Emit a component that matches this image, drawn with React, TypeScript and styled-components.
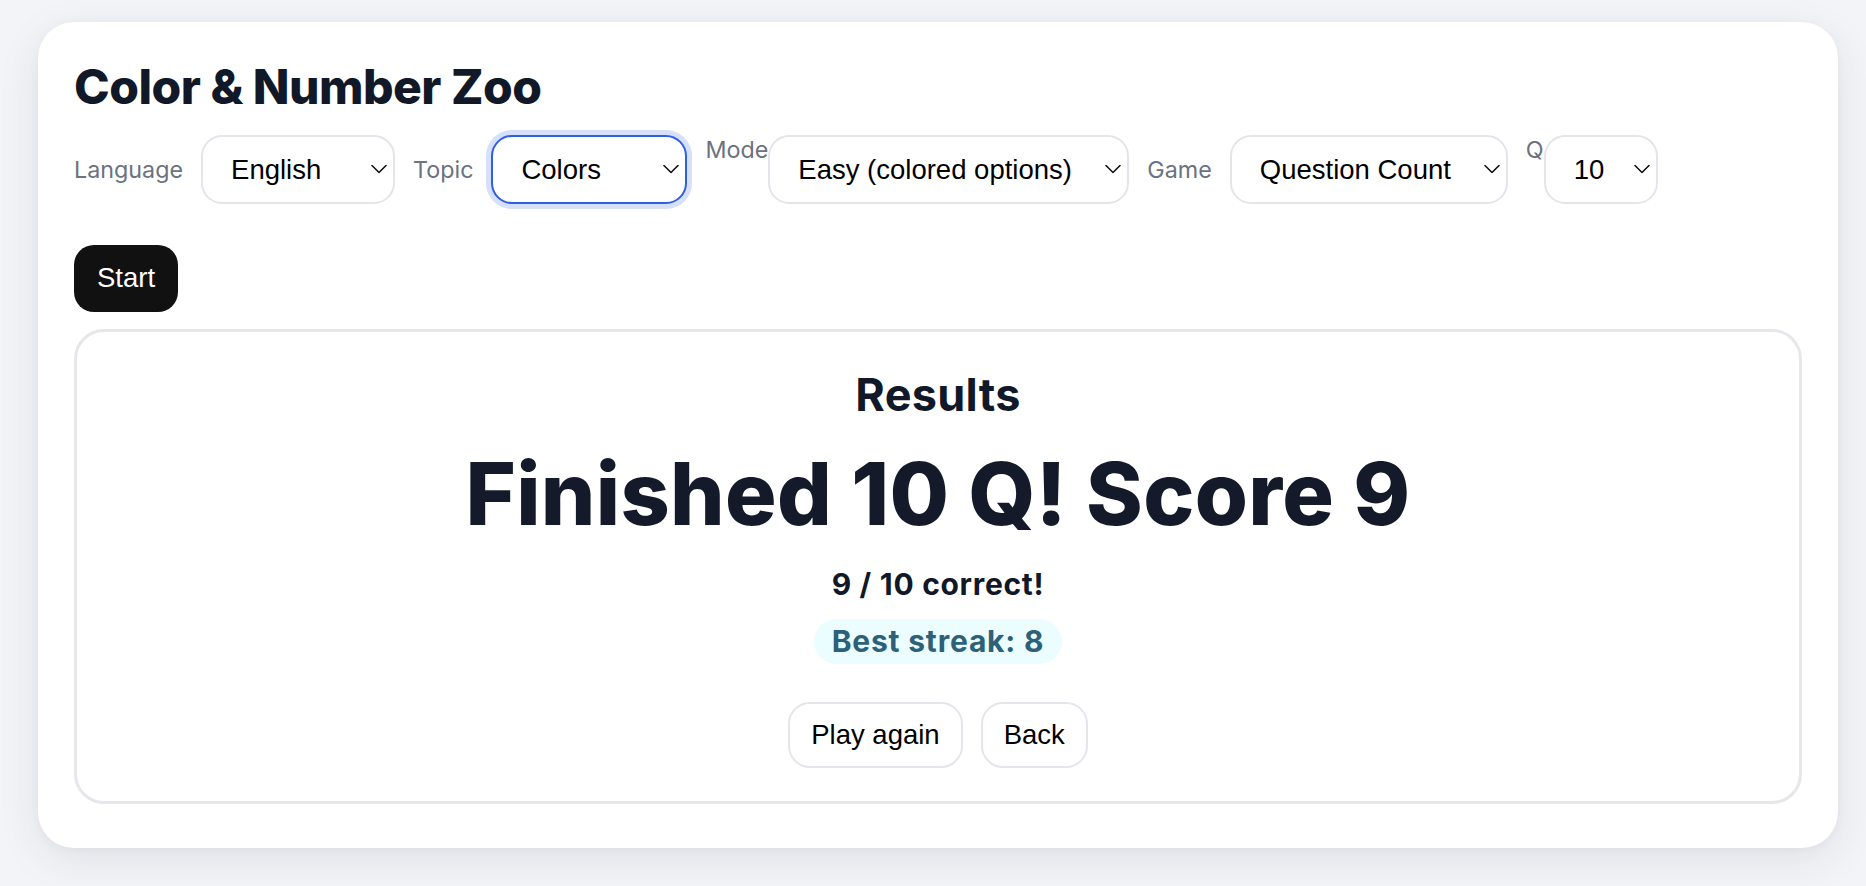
import React from "react";
import styled, { createGlobalStyle, css } from "styled-components";

const Global = createGlobalStyle`
  html, body { margin: 0; padding: 0; background: #f3f4f8; }
  body { font-family: Inter, "Noto Sans", sans-serif; }
  * { box-sizing: border-box; }
`;

const Page = styled.div`
  min-height: 886px;
  padding: 22px 0 0 38px;
`;

const Card = styled.main`
  width: 1800px;
  height: 826px;
  background: #ffffff;
  border-radius: 36px;
  padding: 36px 36px 44px;
  box-shadow: 0 12px 44px rgba(30, 41, 59, 0.09), 0 2px 8px rgba(30, 41, 59, 0.04);
  display: flex;
  flex-direction: column;
`;

const Title = styled.h1`
  margin: 0;
  font-family: Inter, sans-serif;
  font-size: 48px;
  font-weight: 800;
  line-height: 1.2;
  letter-spacing: -0.5px;
  color: #111827;
`;

const Controls = styled.div`
  display: flex;
  align-items: center;
  gap: 18px;
  margin-top: 19px;
  height: 69px;
`;

const Group = styled.div`
  display: flex;
  align-items: flex-start;
  gap: 0;
`;

const Label = styled.span`
  font-family: Inter, sans-serif;
  font-size: 23.3px;
  line-height: 29px;
  color: #6b7280;
  white-space: nowrap;
`;

const SelectWrap = styled.div<{ $w: number }>`
  position: relative;
  width: ${(p) => p.$w}px;
  height: 69px;
  flex: none;
`;

const Select = styled.select<{ $focused?: boolean }>`
  appearance: none;
  -webkit-appearance: none;
  width: 100%;
  height: 100%;
  border: 2px solid #e4e5ea;
  border-radius: 21px;
  background: #ffffff;
  padding: 0 30px 0 28px;
  font-family: "Liberation Sans", Arial, sans-serif;
  font-size: 27.5px;
  color: #000000;
  outline: none;
  ${(p) =>
    p.$focused &&
    css`
      border-color: #2f5fe3;
      box-shadow: 0 0 0 5px #d6e0fa;
    `}
`;

const Chevron = styled.svg`
  position: absolute;
  right: 8px;
  top: 50%;
  width: 16px;
  height: 9px;
  transform: translateY(-50%);
  pointer-events: none;
`;

const StartButton = styled.button`
  align-self: flex-start;
  margin-top: 41px;
  height: 67px;
  padding: 0 23px;
  border: none;
  border-radius: 20px;
  background: #111111;
  color: #ffffff;
  font-family: "Liberation Sans", Arial, sans-serif;
  font-size: 27.5px;
  cursor: pointer;
`;

const Panel = styled.section`
  margin-top: 17px;
  height: 475px;
  border: 3px solid #e5e7eb;
  border-radius: 30px;
  padding-top: 40px;
  display: flex;
  flex-direction: column;
  align-items: center;
`;

const ResultsHeading = styled.h2`
  margin: 0;
  font-family: Inter, sans-serif;
  font-size: 45px;
  font-weight: 700;
  line-height: 1;
  letter-spacing: 0.3px;
  color: #111827;
`;

const BigScore = styled.div`
  margin-top: 34px;
  font-family: Inter, sans-serif;
  font-size: 86px;
  font-weight: 800;
  line-height: 1;
  letter-spacing: 0.3px;
  color: #141a29;
`;

const Correct = styled.div`
  margin-top: 33px;
  font-family: Inter, sans-serif;
  font-size: 30px;
  font-weight: 700;
  line-height: 29px;
  letter-spacing: 0.7px;
  color: #111827;
`;

const Pill = styled.div`
  margin-top: 20px;
  padding: 8px 18px;
  border-radius: 999px;
  background: #ecfdff;
  font-family: Inter, sans-serif;
  font-size: 30px;
  font-weight: 700;
  line-height: 29px;
  letter-spacing: 0.8px;
  color: #2d6179;
`;

const Actions = styled.div`
  margin-top: 38px;
  display: flex;
  gap: 18px;
`;

const GhostButton = styled.button`
  height: 66px;
  padding: 0 21px;
  border: 2px solid #e5e6eb;
  border-radius: 22px;
  background: #ffffff;
  color: #000000;
  font-family: "Liberation Sans", Arial, sans-serif;
  font-size: 27.5px;
  cursor: pointer;
`;

const ChevronIcon = () => (
  <Chevron viewBox="0 0 16 9" fill="none">
    <path d="M1 1 L8 8 L15 1" stroke="#111" strokeWidth="1.6" strokeLinecap="round" strokeLinejoin="round" />
  </Chevron>
);

const Dropdown = ({
  w,
  value,
  options,
  focused,
}: {
  w: number;
  value: string;
  options: string[];
  focused?: boolean;
}) => (
  <SelectWrap $w={w}>
    <Select $focused={focused} defaultValue={value}>
      {options.map((o) => (
        <option key={o} value={o}>
          {o}
        </option>
      ))}
    </Select>
    <ChevronIcon />
  </SelectWrap>
);

export default function App() {
  return (
    <>
      <Global />
      <Page>
        <Card>
          <Title>Color &amp; Number Zoo</Title>
          <Controls>
            <Label>Language</Label>
            <Dropdown w={194} value="English" options={["English", "Español", "日本語"]} />
            <Label>Topic</Label>
            <Dropdown w={196} value="Colors" options={["Colors", "Numbers"]} focused />
            <Group>
              <Label>Mode</Label>
              <Dropdown w={361} value="Easy (colored options)" options={["Easy (colored options)", "Hard"]} />
            </Group>
            <Label>Game</Label>
            <Dropdown w={278} value="Question Count" options={["Question Count", "Time Attack"]} />
            <Group>
              <Label>Q</Label>
              <Dropdown w={114} value="10" options={["5", "10", "20"]} />
            </Group>
          </Controls>
          <StartButton>Start</StartButton>
          <Panel>
            <ResultsHeading>Results</ResultsHeading>
            <BigScore>Finished 10 Q! Score 9</BigScore>
            <Correct>9 / 10 correct!</Correct>
            <Pill>Best streak: 8</Pill>
            <Actions>
              <GhostButton>Play again</GhostButton>
              <GhostButton>Back</GhostButton>
            </Actions>
          </Panel>
        </Card>
      </Page>
    </>
  );
}
